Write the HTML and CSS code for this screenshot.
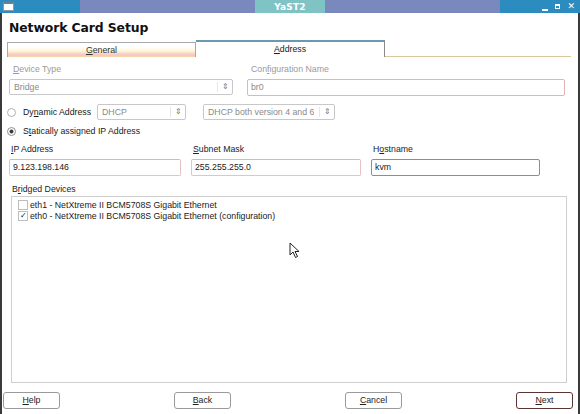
FILE: index.html
```html
<!DOCTYPE html>
<html>
<head>
<meta charset="utf-8">
<link rel="stylesheet" href="styles.css">
</head>
<body>
<div class="window">
  <div class="titlebar">
    <div class="seg seg-blue seg-left"><span class="winicon"></span></div>
    <div class="seg seg-purple seg-a"></div>
    <div class="seg seg-teal"><span class="title-text">YaST2</span></div>
    <div class="seg seg-purple seg-b"></div>
    <div class="seg seg-blue seg-right">
      <span class="ctl ctl-min"></span>
      <span class="ctl ctl-max"></span>
      <span class="ctl ctl-close">✕</span>
    </div>
  </div>
  <div class="content">
    <h1 class="heading">Network Card Setup</h1>
    <div class="tabs">
      <div class="tab tab-inactive"><span><u>G</u>eneral</span></div>
      <div class="tab tab-active"><span><u>A</u>ddress</span></div>
      <div class="tab-rest"></div>
    </div>

    <div class="row row-device">
      <div class="field field-device">
        <div class="label disabled"><u>D</u>evice Type</div>
        <div class="combo combo-device disabled"><span class="combo-text">Bridge</span><span class="spin"><span class="sep"></span><span class="arr">⇕</span></span></div>
      </div>
      <div class="field field-conf">
        <div class="label disabled">Con<u>f</u>iguration Name</div>
        <div class="input input-conf"><span class="muted">br0</span></div>
      </div>
    </div>

    <div class="row row-radio">
      <span class="radio"></span>
      <span class="radio-label radio-label-dyn">Dy<u>n</u>amic Address</span>
      <div class="combo combo-dhcp disabled"><span class="combo-text">DHCP</span><span class="spin"><span class="sep"></span><span class="arr">⇕</span></span></div>
      <div class="combo combo-dhcpver disabled"><span class="combo-text">DHCP both version 4 and 6</span><span class="spin"><span class="sep"></span><span class="arr">⇕</span></span></div>
    </div>

    <div class="row row-radio2">
      <span class="radio radio-on"></span>
      <span class="radio-label">S<u>t</u>atically assigned IP Address</span>
    </div>

    <div class="row row-ip">
      <div class="field field-ip">
        <div class="label"><u>I</u>P Address</div>
        <div class="input input-pink">9.123.198.146</div>
      </div>
      <div class="field field-mask">
        <div class="label"><u>S</u>ubnet Mask</div>
        <div class="input input-pink">255.255.255.0</div>
      </div>
      <div class="field field-host">
        <div class="label">H<u>o</u>stname</div>
        <div class="input input-focus">kvm</div>
      </div>
    </div>

    <div class="label bridged-label">B<u>r</u>idged Devices</div>
    <div class="listbox">
      <div class="item"><span class="check"></span><span>eth1 - NetXtreme II BCM5708S Gigabit Ethernet</span></div>
      <div class="item"><span class="check check-on">✓</span><span>eth0 - NetXtreme II BCM5708S Gigabit Ethernet (configuration)</span></div>
    </div>

    <div class="buttons">
      <button class="btn"><u>H</u>elp</button>
      <button class="btn"><u>B</u>ack</button>
      <button class="btn"><u>C</u>ancel</button>
      <button class="btn btn-default"><u>N</u>ext</button>
    </div>
  </div>
  <svg class="cursor" width="12" height="17" viewBox="0 0 12 17">
    <path d="M1 1 L1 13 L4 10 L6.5 15.5 L8.5 14.5 L6 9.5 L10 9.5 Z" fill="#fff" stroke="#222" stroke-width="1" stroke-linejoin="miter"/>
  </svg>
</div>
</body>
</html>
```

FILE: styles.css
```css
* { box-sizing: border-box; }
html, body { margin: 0; padding: 0; }
body {
  width: 580px;
  height: 414px;
  overflow: hidden;
  font-family: "Liberation Sans", Arial, sans-serif;
  font-size: 8.75px;
  color: #1a1a1a;
  background: #fff;
}
u { text-decoration: underline; text-underline-offset: 1px; }

.window {
  position: relative;
  width: 580px;
  height: 414px;
  border-left: 2px solid #3a3a3a;
  border-right: 2px solid #3a3a3a;
  background: #fff;
  display: flex;
  flex-direction: column;
}

.titlebar {
  height: 13px;
  display: flex;
  margin: 0 -2px;
}
.seg { height: 13px; display: flex; align-items: center; }
.seg-blue { background: #2d8cbf; }
.seg-purple { background: #7a89bd; }
.seg-teal { background: #7fc3c5; justify-content: center; }
.seg-left { width: 80px; padding-left: 3px; }
.seg-a { width: 175px; }
.seg-teal { width: 70px; }
.seg-b { width: 175px; }
.seg-right { flex: 1; justify-content: flex-end; padding-right: 5px; gap: 7px; }
.winicon {
  width: 11px; height: 9px;
  background: #fff;
  border: 1px solid #8a9aa8;
  border-top: 2px solid #6a7f90;
}
.title-text {
  color: #fff;
  font-family: "DejaVu Sans", sans-serif;
  font-size: 9px;
  font-weight: bold;
  letter-spacing: 0.2px;
}
.ctl { display: inline-block; }
.ctl-min { width: 6px; height: 2px; background: #fff; margin-top: 6px; }
.ctl-max { width: 5px; height: 5px; border: 1px solid #fff; border-top-width: 2px; }
.ctl-close { color: #fff; font-size: 9px; font-weight: bold; line-height: 9px; font-family: "DejaVu Sans", sans-serif; }

.content {
  flex: 1;
  display: flex;
  flex-direction: column;
  padding: 0 5px 0 0;
}

.heading {
  margin: 6px 0 0 7px;
  height: 21px;
  font-family: "DejaVu Sans", sans-serif;
  font-size: 12.4px;
  font-weight: bold;
  line-height: 18px;
  color: #111;
  letter-spacing: -0.1px;
}

.tabs {
  display: flex;
  align-items: flex-end;
  height: 17px;
  margin-left: 5px;
}
.tab {
  width: 189px;
  display: flex;
  align-items: center;
  justify-content: center;
}
.tab-inactive {
  height: 15px;
  border: 1px solid #a8a8a8;
  border-bottom: none;
  background: linear-gradient(#ffffff 0%, #ffffff 30%, #fdf6d8 55%, #f7c6c0 85%, #f1d8a8 100%);
  color: #333;
  padding-bottom: 1px;
}
.tab-active {
  height: 17px;
  border-top: 2px solid #6b9aae;
  border-right: 1px solid #8a8a8a;
  background: #fff;
  padding-bottom: 2px;
}
.tab-rest {
  flex: 1;
  height: 2px;
  border-bottom: 1px solid #d8c89c;
  margin-right: 2px;
}

.row { display: flex; }
.field { display: flex; flex-direction: column; }
.label { height: 13px; line-height: 13px; padding-left: 2px; color: #222; }
.disabled { color: #9a9a9a; }

.row-device { margin-top: 6px; padding-left: 7px; }
.row-device .label { padding-left: 4px; height: 16px; line-height: 12px; }
.field-device { width: 238px; }
.field-conf { flex: 1; padding-right: 8px; }

.combo {
  height: 16px;
  border: 1px solid #c8c8c8;
  border-radius: 2px;
  display: flex;
  align-items: center;
  justify-content: space-between;
  padding-left: 4px;
  background: #fff;
  flex: none;
}
.combo-text { color: #8a8a8a; white-space: nowrap; overflow: hidden; }
.spin { display: flex; align-items: center; height: 100%; flex: none; }
.sep { width: 1px; height: 10px; background: #e6e6e6; margin-right: 4px; }
.arr { font-size: 8px; color: #777; width: 10px; line-height: 10px; }
.combo-device { width: 224px; }

.input {
  height: 17px;
  border: 1px solid #c8c8c8;
  border-radius: 2px;
  padding-left: 3px;
  line-height: 15px;
  white-space: nowrap;
  overflow: hidden;
}
.input-conf { border-color: #e2b4b4; }
.muted { color: #8a8a8a; }
.input-pink { border-color: #e6c2c2; border-top-color: #e8b0b0; }
.input-focus { border-color: #6b9ab0; }

.row-radio { margin-top: 8px; padding-left: 5px; align-items: center; height: 16px; }
.row-radio2 { margin-top: 5px; padding-left: 5px; align-items: center; height: 12px; }
.radio {
  width: 9px; height: 9px;
  border: 1px solid #b0b0b0;
  border-radius: 50%;
  background: #fff;
  flex: none;
}
.radio-on { background: radial-gradient(circle, #333 0, #444 1.6px, #fff 2.4px); border-color: #909090; }
.radio-label { margin-left: 7px; white-space: nowrap; }
.radio-label-dyn { width: 74px; flex: none; }
.combo-dhcp { width: 89px; }
.combo-dhcpver { width: 132px; margin-left: 17px; }

.row-ip { margin-top: 7px; padding-left: 7px; }
.field-ip { width: 172px; }
.field-mask { width: 170px; margin-left: 10px; }
.field-host { width: 169px; margin-left: 10px; }
.row-ip .label { height: 15px; line-height: 11px; padding-left: 2px; }

.bridged-label { margin-top: 7px; margin-left: 8px; height: 13px; line-height: 13px; }
.listbox {
  margin: 0 0 0 9px;
  width: 556px;
  height: 187px;
  border: 1px solid #cfcfcf;
  padding: 2px 0 0 6px;
}
.item { display: flex; align-items: center; height: 11px; white-space: nowrap; }
.check {
  width: 10px; height: 10px;
  border: 1px solid #bdbdbd;
  background: #fff;
  margin-right: 2px;
  display: flex; align-items: center; justify-content: center;
  font-size: 8px; line-height: 8px; color: #222;
  flex: none;
}

.buttons {
  margin-top: 9px;
  display: flex;
  justify-content: space-between;
  padding-left: 1px;
}
.btn {
  width: 57px;
  height: 17px;
  border: 1px solid #9a9a9a;
  border-radius: 3px;
  background: #fff;
  font-family: "Liberation Sans", Arial, sans-serif;
  font-size: 8.75px;
  color: #222;
  padding: 0;
  line-height: 15px;
}
.btn-default { border-color: #5b3434; }

.cursor {
  position: absolute;
  left: 287px;
  top: 242px;
}
```
